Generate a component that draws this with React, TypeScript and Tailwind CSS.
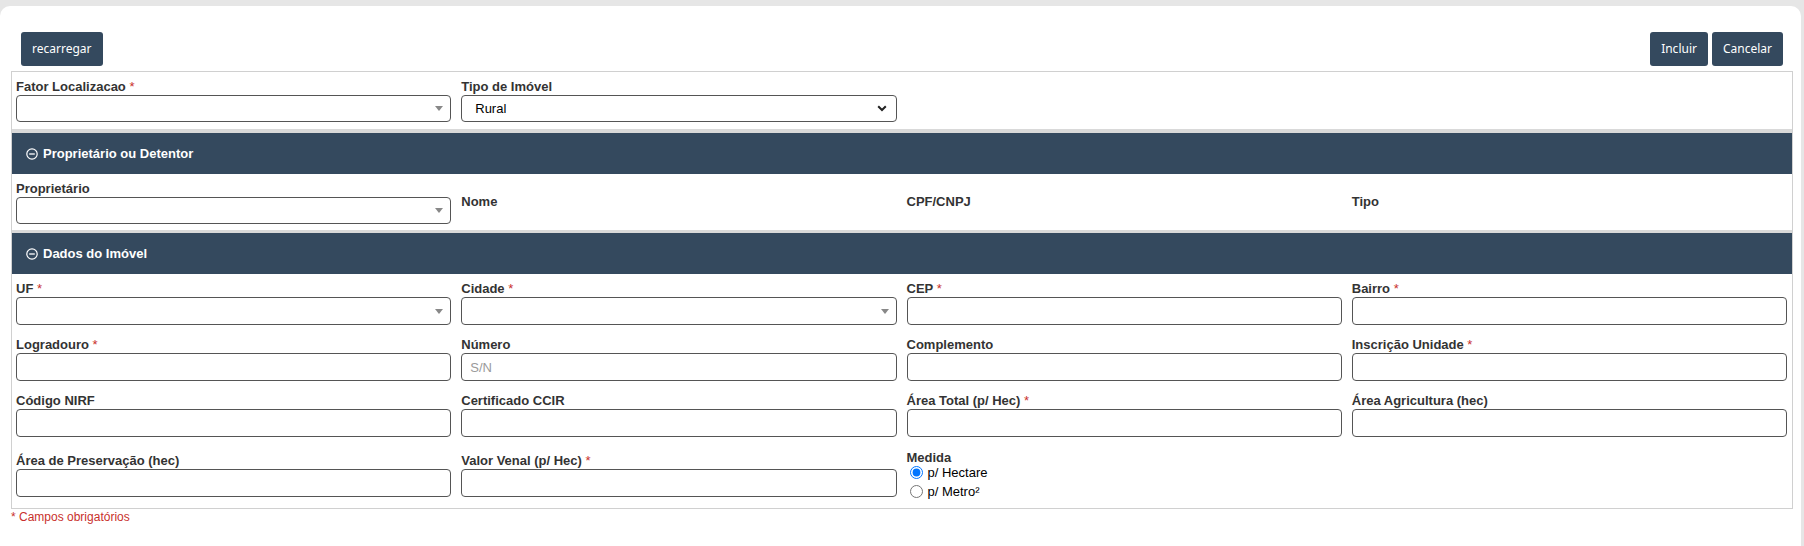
import type { ReactNode } from 'react';

// Cadastro de imóvel: campos do imóvel rural com proprietário e dados de endereço.

function Req() {
  return <span className="font-normal text-[#c9302c]"> *</span>;
}

function Label({ children, req }: { children: ReactNode; req?: boolean }) {
  return (
    <label className="block text-[13px] leading-[16px] font-bold text-[#333]">
      {children}
      {req && <Req />}
    </label>
  );
}

// select2-style combo, empty, with the small grey caret
function Combo({ tall }: { tall?: boolean }) {
  return (
    <div
      className={
        tall
          ? 'flex h-[28px] items-center justify-end rounded-[4px] border border-[#555] bg-white pr-[7px]'
          : 'flex h-[27px] items-center justify-end rounded-[4px] border border-[#555] bg-white pr-[7px]'
      }
    >
      <span className="h-0 w-0 border-x-[4px] border-t-[5px] border-x-transparent border-t-[#888]" />
    </div>
  );
}

function Input({ placeholder }: { placeholder?: string }) {
  return (
    <input
      placeholder={placeholder}
      className="block h-[28px] w-full rounded-[4px] border border-[#555] bg-white px-[8px] text-[13px] text-black outline-none placeholder:text-[#9a9a9a]"
    />
  );
}

function Field({ label, req, children }: { label: string; req?: boolean; children: ReactNode }) {
  return (
    <div>
      <Label req={req}>{label}</Label>
      {children}
    </div>
  );
}

function Header({ title }: { title: string }) {
  return (
    <div className="flex h-[41px] items-center gap-[5px] bg-[#34495e] pl-[14px] text-[13px] font-bold text-white">
      <svg width="12" height="12" viewBox="0 0 12 12" fill="none">
        <circle cx="6" cy="6" r="5.2" stroke="white" strokeWidth="1.2" />
        <path d="M3.2 6h5.6" stroke="white" strokeWidth="1.3" />
      </svg>
      {title}
    </div>
  );
}

function Button({ children }: { children: ReactNode }) {
  return (
    <button className="h-[34px] rounded-[3px] bg-[#34495e] px-[11px] font-['Noto_Sans',sans-serif] text-[12px] text-white">
      {children}
    </button>
  );
}

function Radio({ label, checked }: { label: string; checked?: boolean }) {
  return (
    <label className="flex h-[19px] items-center text-[13px] text-black">
      <input
        type="radio"
        name="medida"
        defaultChecked={checked}
        className="m-0 mr-[5px] ml-[3px] h-[13px] w-[13px]"
      />
      {label}
    </label>
  );
}

export default function App() {
  return (
    <div className="h-[546px] w-[1804px] overflow-hidden bg-[#e6e6e6] pt-[6px] font-['Liberation_Sans',Arial,sans-serif]">
      <div className="h-full w-[1801px] rounded-t-[10px] bg-white">
        <div className="flex justify-between pt-[26px] pr-[18px] pl-[21px]">
          <Button>recarregar</Button>
          <div className="flex gap-[4px]">
            <Button>Incluir</Button>
            <Button>Cancelar</Button>
          </div>
        </div>

        <div className="mt-[5px] ml-[11px] w-[1782px] border border-[#d0d0d0]">
          <div className="grid grid-cols-4 gap-x-[10px] pt-[7px] pr-[5px] pb-[7px] pl-[4px]">
            <Field label="Fator Localizacao" req>
              <Combo />
            </Field>
            <Field label="Tipo de Imóvel">
              <div className="relative">
                <select
                  defaultValue="Rural"
                  className="block h-[27px] w-full appearance-none rounded-[4px] border border-[#555] bg-white pl-[13px] text-[13px] text-black outline-none"
                >
                  <option>Rural</option>
                  <option>Urbano</option>
                </select>
                <svg
                  className="pointer-events-none absolute top-[10px] right-[10px]"
                  width="10"
                  height="7"
                  viewBox="0 0 10 7"
                  fill="none"
                >
                  <path d="M1.2 1.2 5 5l3.8-3.8" stroke="#222" strokeWidth="2" />
                </svg>
              </div>
            </Field>
          </div>
          <div className="h-[4px] bg-[#d9d9d9]" />

          <Header title="Proprietário ou Detentor" />
          <div className="grid grid-cols-4 gap-x-[10px] pt-[7px] pr-[5px] pb-[6px] pl-[4px] text-[13px] leading-[16px] font-bold text-[#333]">
            <Field label="Proprietário">
              <Combo />
            </Field>
            <div className="pt-[13px]">Nome</div>
            <div className="pt-[13px]">CPF/CNPJ</div>
            <div className="pt-[13px]">Tipo</div>
          </div>
          <div className="h-[3px] bg-[#d9d9d9]" />

          <Header title="Dados do Imóvel" />
          <div className="pt-[7px] pr-[5px] pb-[7px] pl-[4px]">
            <div className="grid grid-cols-4 gap-x-[10px] gap-y-[12px]">
              <Field label="UF" req>
                <Combo tall />
              </Field>
              <Field label="Cidade" req>
                <Combo tall />
              </Field>
              <Field label="CEP" req>
                <Input />
              </Field>
              <Field label="Bairro" req>
                <Input />
              </Field>

              <Field label="Logradouro" req>
                <Input />
              </Field>
              <Field label="Número">
                <Input placeholder="S/N" />
              </Field>
              <Field label="Complemento">
                <Input />
              </Field>
              <Field label="Inscrição Unidade" req>
                <Input />
              </Field>

              <Field label="Código NIRF">
                <Input />
              </Field>
              <Field label="Certificado CCIR">
                <Input />
              </Field>
              <Field label="Área Total (p/ Hec)" req>
                <Input />
              </Field>
              <Field label="Área Agricultura (hec)">
                <Input />
              </Field>
            </div>

            <div className="mt-[13px] grid grid-cols-4 gap-x-[10px]">
              <div className="pt-[3px]">
                <Field label="Área de Preservação (hec)">
                  <Input />
                </Field>
              </div>
              <div className="pt-[3px]">
                <Field label="Valor Venal (p/ Hec)" req>
                  <Input />
                </Field>
              </div>
              <div>
                <Label>Medida</Label>
                <div className="-mt-[3px]">
                  <Radio label="p/ Hectare" checked />
                  <Radio label="p/ Metro²" />
                </div>
              </div>
            </div>
          </div>
        </div>

        <p className="ml-[11px] pt-[1px] text-[12px] leading-[14px] text-[#c9302c]">* Campos obrigatórios</p>
      </div>
    </div>
  );
}
